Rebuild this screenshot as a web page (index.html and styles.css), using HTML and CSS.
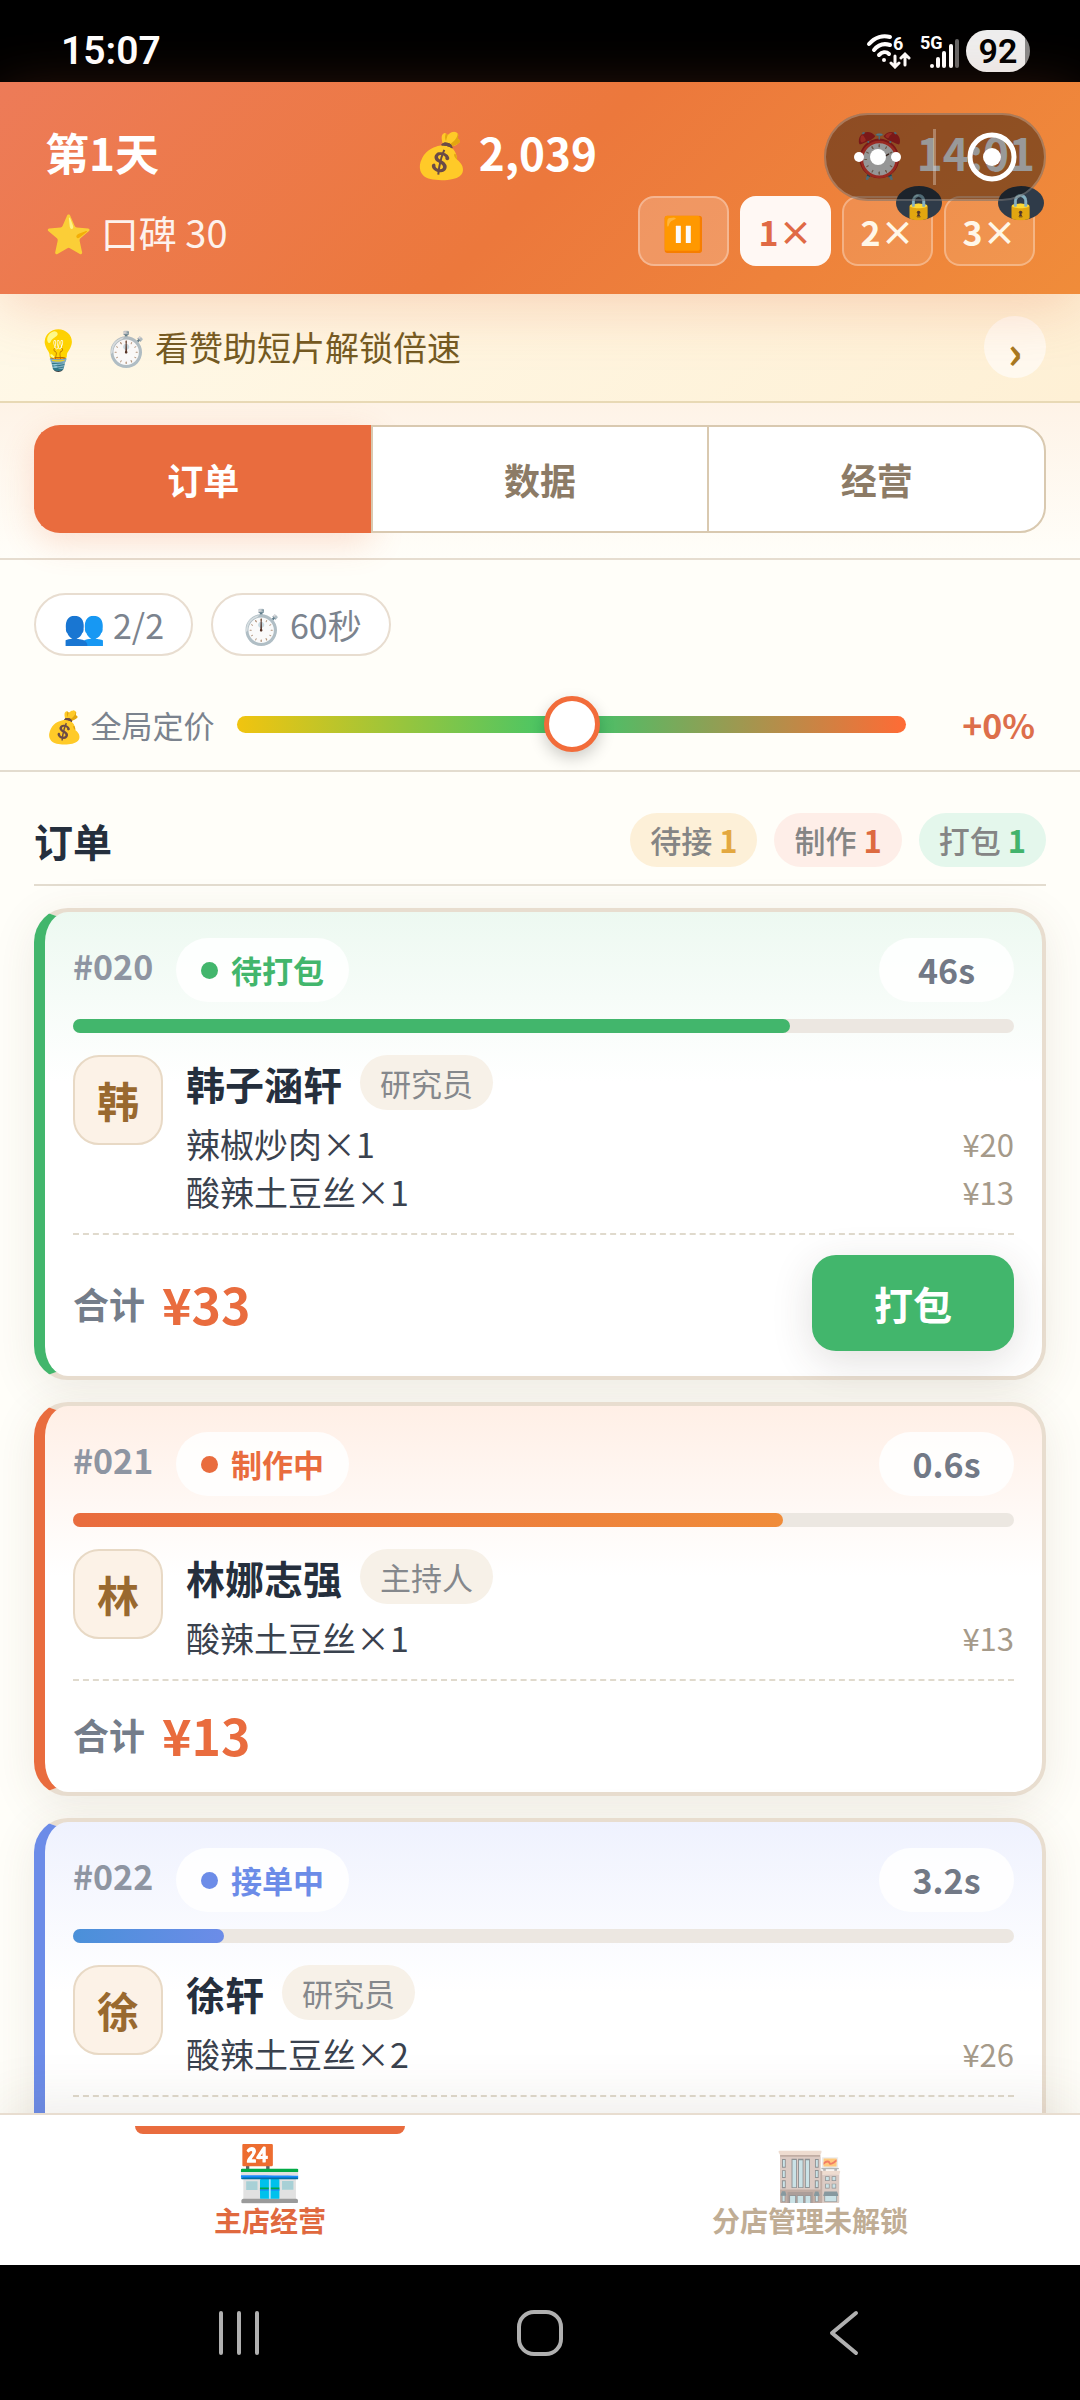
FILE: index.html
```html
<!DOCTYPE html>
<html lang="zh-CN">
<head>
  <meta charset="UTF-8">
  <meta name="viewport" content="width=device-width, initial-scale=1.0">
  <title>主店经营</title>
  <link rel="stylesheet" href="styles.css">
</head>
<body>
  <div class="status-bar">
    <span class="time">15:07</span>
    <div class="status-icons">
      <svg width="46" height="36" viewBox="0 0 46 36" fill="none" stroke="#fff" stroke-width="4" stroke-linecap="round">
        <path d="M3 11C9 4 17 2 24 4"/>
        <path d="M8 17c4-5 10-7 16-5"/>
        <path d="M13 22c3-3 7-4 10-1"/>
        <circle cx="18" cy="27" r="2" fill="#fff" stroke="none"/>
        <path d="M29 23v10M25 30l4 4 4-4M39 32V22M35 25l4-4 4 4" stroke-width="3"/>
        <text x="27" y="17" class="svg-text">6</text>
      </svg>
      <svg width="42" height="40" viewBox="0 0 42 40">
        <text x="2" y="18" class="svg-text">5G</text>
        <g fill="#fff">
          <circle cx="14" cy="35" r="2"/>
          <rect x="18" y="26" width="4" height="11" rx="2"/>
          <rect x="24" y="20" width="4" height="17" rx="2"/>
          <rect x="31" y="13" width="4" height="24" rx="2"/>
          <rect x="37" y="8" width="4" height="29" rx="2" fill="#666"/>
        </g>
      </svg>
      <span class="battery">92</span>
    </div>
  </div>

  <header class="header">
    <div class="header-row">
      <span>第1天</span>
      <span>💰 2,039</span>
      <span>⏰ 14:01</span>
    </div>
    <div class="header-row sub">
      <span class="reputation">⭐ 口碑 30</span>
      <div class="speeds">
        <button class="speed pause">⏸️</button>
        <button class="speed active">1×</button>
        <button class="speed">2×<span class="lock">🔒</span></button>
        <button class="speed">3×<span class="lock">🔒</span></button>
      </div>
    </div>
    <div class="capsule">
      <svg viewBox="0 0 222 88" fill="#fff">
        <circle cx="35" cy="44" r="5"/>
        <circle cx="54" cy="44" r="8"/>
        <circle cx="72" cy="44" r="5"/>
        <rect x="109" y="16" width="3" height="56" opacity=".3"/>
        <circle cx="168" cy="44" r="22" fill="none" stroke="#fff" stroke-width="5"/>
        <circle cx="168" cy="44" r="9"/>
      </svg>
    </div>
  </header>

  <div class="hint">
    <span class="bulb">💡</span>
    <span class="hint-text">⏱️ 看赞助短片解锁倍速</span>
    <button class="hint-go">›</button>
  </div>

  <div class="tabs-wrap">
    <div class="tabs">
      <button class="tab active">订单</button>
      <button class="tab">数据</button>
      <button class="tab">经营</button>
    </div>
  </div>

  <section class="controls">
    <div class="chips">
      <span class="chip">👥 2/2</span>
      <span class="chip">⏱️ 60秒</span>
    </div>
    <div class="pricing">
      <label for="price">💰 全局定价</label>
      <input type="range" id="price" min="-50" max="50" value="0">
      <output for="price">+0%</output>
    </div>
  </section>

  <main class="orders">
    <div class="orders-head">
      <h2>订单</h2>
      <div class="counts">
        <span class="count wait">待接 <b>1</b></span>
        <span class="count cook">制作 <b>1</b></span>
        <span class="count pack">打包 <b>1</b></span>
      </div>
    </div>

    <article class="card green">
      <div class="card-top">
        <span class="no">#020</span>
        <span class="state">待打包</span>
        <span class="left">46s</span>
      </div>
      <div class="bar"><div class="fill" style="width: 76.2%"></div></div>
      <div class="customer">
        <div class="avatar">韩</div>
        <div class="detail">
          <div class="who"><h3>韩子涵轩</h3><span class="role">研究员</span></div>
          <div class="dish"><span>辣椒炒肉×1</span><span class="price">¥20</span></div>
          <div class="dish"><span>酸辣土豆丝×1</span><span class="price">¥13</span></div>
        </div>
      </div>
      <div class="card-foot">
        <span class="sum">合计</span>
        <span class="amount">¥33</span>
        <button class="pack-btn">打包</button>
      </div>
    </article>

    <article class="card orange">
      <div class="card-top">
        <span class="no">#021</span>
        <span class="state">制作中</span>
        <span class="left">0.6s</span>
      </div>
      <div class="bar"><div class="fill" style="width: 75.4%"></div></div>
      <div class="customer">
        <div class="avatar">林</div>
        <div class="detail">
          <div class="who"><h3>林娜志强</h3><span class="role">主持人</span></div>
          <div class="dish"><span>酸辣土豆丝×1</span><span class="price">¥13</span></div>
        </div>
      </div>
      <div class="card-foot">
        <span class="sum">合计</span>
        <span class="amount">¥13</span>
      </div>
    </article>

    <article class="card blue">
      <div class="card-top">
        <span class="no">#022</span>
        <span class="state">接单中</span>
        <span class="left">3.2s</span>
      </div>
      <div class="bar"><div class="fill" style="width: 16%"></div></div>
      <div class="customer">
        <div class="avatar">徐</div>
        <div class="detail">
          <div class="who"><h3>徐轩</h3><span class="role">研究员</span></div>
          <div class="dish"><span>酸辣土豆丝×2</span><span class="price">¥26</span></div>
        </div>
      </div>
      <div class="card-foot"></div>
    </article>
  </main>

  <nav class="bottom-nav">
    <a href="#" class="nav-item active"><span class="nav-icon">🏪</span>主店经营</a>
    <a href="#" class="nav-item locked"><span class="nav-icon">🏬</span>分店管理未解锁</a>
  </nav>

  <div class="system-nav">
    <svg width="48" height="48" viewBox="0 0 48 48"><path d="M5 4v40M23 4v40M41 4v40"/></svg>
    <svg width="48" height="48" viewBox="0 0 48 48"><rect x="3" y="3" width="42" height="42" rx="15"/></svg>
    <svg width="48" height="48" viewBox="0 0 48 48"><path d="M40 4L16 24l24 20"/></svg>
  </div>
</body>
</html>
```

FILE: styles.css
```css
* {
  box-sizing: border-box;
}

body {
  margin: 0;
  height: 100vh;
  display: flex;
  flex-direction: column;
  overflow: hidden;
  background: #fffef9;
  color: #252f3d;
  font-family: "Noto Sans CJK SC", "Noto Color Emoji", sans-serif;
  font-size: 34px;
}

body > * {
  flex-shrink: 0;
}

button {
  font: inherit;
  padding: 0;
  border: none;
  cursor: pointer;
}

h2, h3 {
  margin: 0;
  font-size: 39px;
  line-height: 54px;
}

/* status bar */
.status-bar {
  height: 82px;
  padding: 20px 50px 0 61px;
  display: flex;
  align-items: center;
  justify-content: space-between;
  background: #000;
  color: #fff;
}

.time {
  font: 600 39px Roboto, sans-serif;
}

.status-icons {
  display: flex;
  align-items: center;
  gap: 6px;
}

.svg-text {
  font: bold 18px Roboto, sans-serif;
  fill: #fff;
  stroke: none;
}

.battery {
  width: 64px;
  line-height: 42px;
  border-radius: 21px;
  background: linear-gradient(90deg, #eee 92%, #888 92%);
  color: #000;
  text-align: center;
  font-family: Roboto, sans-serif;
  font-weight: 600;
}

/* header */
.header {
  position: relative;
  z-index: 2;
  padding: 40px 45px 28px;
  background: linear-gradient(135deg, #ed7b58, #ec783c 50%, #f08c3a);
  box-shadow: 0 12px 56px rgba(232, 108, 60, 0.25);
  color: #fff;
}

.header-row {
  display: flex;
  justify-content: space-between;
  align-items: center;
  height: 60px;
  font-size: 44px;
  font-weight: 600;
}

.header-row.sub {
  height: 70px;
  margin-top: 14px;
  font-size: 38px;
  font-weight: 400;
}

.reputation {
  opacity: 0.9;
}

.speeds {
  display: flex;
  gap: 11px;
}

.speed {
  position: relative;
  width: 91px;
  height: 70px;
  border: 2px solid rgba(255, 255, 255, 0.3);
  border-radius: 16px;
  background: rgba(255, 255, 255, 0.1);
  color: #fff7e8;
  font-size: 34px;
  font-weight: 600;
}

.speed.pause {
  background: rgba(255, 255, 255, 0.2);
}

.speed.active {
  background: #fff8f4;
  border-color: #fff8f4;
  color: #e06a45;
}

.lock {
  position: absolute;
  top: -12px;
  right: -11px;
  width: 46px;
  height: 34px;
  border-radius: 50%;
  background: #2f3b49;
  font-size: 25px;
  line-height: 36px;
}

.capsule {
  position: absolute;
  top: 31px;
  right: 34px;
  width: 222px;
  height: 88px;
  border-radius: 44px;
  background: rgba(0, 0, 0, 0.4);
  box-shadow: inset 0 0 0 2px rgba(255, 255, 255, 0.25);
}

.capsule svg {
  display: block;
}

/* sponsor hint */
.hint {
  display: flex;
  align-items: center;
  height: 109px;
  padding: 0 34px 2px;
  background: linear-gradient(135deg, #fff9e8, #fef0d5);
  border-bottom: 2px solid #e8d9b5;
  color: #735a22;
}

.bulb {
  width: 71px;
  font-size: 39px;
}

.hint-text {
  flex: 1;
}

.hint-go {
  width: 62px;
  height: 62px;
  padding-top: 6px;
  border-radius: 50%;
  background: rgba(255, 255, 255, 0.6);
  color: #a87820;
  font-size: 45px;
  font-weight: 700;
  line-height: 50px;
}

/* tabs */
.tabs-wrap {
  padding: 22px 34px 25px;
  background: linear-gradient(#fef3e7, #fffef9);
  border-bottom: 2px solid #e6ddd0;
}

.tabs {
  display: flex;
  height: 108px;
}

.tab {
  flex: 1;
  border: 2px solid #d9c9b0;
  border-right-width: 0;
  background: #fff;
  color: #8c7b66;
  font-size: 36px;
  font-weight: 600;
}

.tab.active {
  background: #e96c3e;
  border-color: #e96c3e;
  color: #fff;
  box-shadow: 0 10px 34px rgba(233, 108, 62, 0.2);
}

.tab:first-child {
  border-radius: 26px 0 0 26px;
}

.tab:last-child {
  border-right-width: 2px;
  border-radius: 0 26px 26px 0;
}

/* controls */
.controls {
  padding: 33px 34px 16px;
  border-bottom: 2px solid #e3dccf;
  color: #7b838e;
}

.chips {
  display: flex;
  gap: 18px;
}

.chip {
  height: 63px;
  padding: 0 27px;
  border: 2px solid #e8ddd0;
  border-radius: 32px;
  background: #fff;
  font-size: 34px;
  line-height: 60px;
}

.pricing {
  display: flex;
  align-items: center;
  height: 60px;
  margin-top: 38px;
  padding: 0 11px;
}

.pricing label {
  width: 192px;
  font-size: 31px;
}

.pricing input {
  -webkit-appearance: none;
  appearance: none;
  flex: 1;
  min-width: 0;
  height: 17px;
  margin: 0;
  border-radius: 9px;
  background: linear-gradient(90deg, #f1c40f, #3cc66c 50%, #ff6b35);
}

.pricing input::-webkit-slider-thumb {
  -webkit-appearance: none;
  width: 56px;
  height: 56px;
  border: 5px solid #f26c3a;
  border-radius: 50%;
  background: #fff;
  box-shadow: 0 6px 16px rgba(0, 0, 0, 0.2);
}

.pricing output {
  width: 129px;
  color: #dd6f4b;
  font-weight: 600;
  text-align: right;
}

/* orders */
.orders {
  flex: 1;
  min-height: 0;
  padding: 41px 34px 0;
  overflow: hidden;
}

.orders-head {
  display: flex;
  align-items: center;
  justify-content: space-between;
  padding-bottom: 17px;
  margin-bottom: 22px;
  border-bottom: 2px solid #e3dccf;
}

.counts {
  display: flex;
  gap: 17px;
}

.count {
  padding: 0 20px;
  border-radius: 27px;
  color: #858585;
  font-size: 31px;
  font-weight: 500;
  line-height: 54px;
}

.wait { background: #fdf0d8; }
.cook { background: #feeee8; }
.pack { background: #e4f7ec; }
.wait b { color: #e3a840; }
.cook b { color: #dd6a40; }
.pack b { color: #42b36c; }

.card {
  padding: 26px 28px 25px;
  margin-bottom: 22px;
  border: 4px solid #e8ddcf;
  border-left: 11px solid var(--main);
  border-radius: 34px;
  background: #fff linear-gradient(var(--tint), #fff 170px);
  box-shadow: 0 10px 45px rgba(90, 70, 40, 0.1);
}

.green {
  --main: #42b66c;
  --tint: #edf9f1;
  --bar: #42b66c;
}

.orange {
  --main: #e96c3e;
  --tint: #ffefe6;
  --bar: linear-gradient(90deg, #e96c3e, #f08c3a);
}

.blue {
  --main: #6c8ce8;
  --tint: #eff2fe;
  --bar: linear-gradient(90deg, #4a90d9, #6c8ce8);
}

.card-top {
  display: flex;
  align-items: center;
}

.no {
  width: 103px;
  color: #8e95a2;
  font-size: 34px;
  font-weight: 600;
  line-height: 56px;
  align-self: flex-start;
}

.state {
  display: flex;
  align-items: center;
  gap: 13px;
  padding: 0 25px;
  border-radius: 32px;
  background: rgba(255, 255, 255, 0.85);
  color: var(--main);
  font-size: 31px;
  font-weight: 600;
  line-height: 64px;
}

.state::before {
  content: "";
  width: 17px;
  height: 17px;
  border-radius: 50%;
  background: var(--main);
}

.left {
  width: 135px;
  margin-left: auto;
  border-radius: 32px;
  background: rgba(255, 255, 255, 0.85);
  color: #727986;
  font-weight: 600;
  line-height: 64px;
  text-align: center;
}

.bar {
  height: 14px;
  margin: 17px 0 22px;
  border-radius: 7px;
  background: #ece7e1;
}

.fill {
  height: 14px;
  border-radius: 7px;
  background: var(--bar);
}

.customer {
  display: flex;
  gap: 23px;
  padding-bottom: 17px;
  border-bottom: 2px dashed #e0dacd;
}

.avatar {
  width: 90px;
  height: 90px;
  border: 2px solid #e8d9c5;
  border-radius: 26px;
  background: #fcf2e7;
  color: #99692f;
  font-size: 42px;
  font-weight: 700;
  line-height: 86px;
  text-align: center;
}

.detail {
  flex: 1;
}

.who {
  display: flex;
  align-items: center;
  gap: 18px;
  margin-bottom: 10px;
}

.role {
  padding: 0 20px;
  border-radius: 28px;
  background: #f7f1e8;
  color: #85888c;
  font-size: 31px;
  line-height: 55px;
}

.dish {
  display: flex;
  justify-content: space-between;
  color: #3a424e;
  line-height: 48px;
}

.price {
  color: #a59a8a;
  font-size: 31px;
}

.card-foot {
  display: flex;
  align-items: center;
  gap: 17px;
  min-height: 66px;
  margin-top: 20px;
}

.sum {
  color: #747d8a;
  font-size: 36px;
  font-weight: 600;
}

.amount {
  color: #e96c3e;
  font-size: 50px;
  font-weight: 700;
  line-height: 66px;
}

.pack-btn {
  width: 202px;
  height: 96px;
  margin-left: auto;
  border-radius: 24px;
  background: #42b66c;
  box-shadow: 0 10px 40px rgba(60, 50, 40, 0.15);
  color: #fff;
  font-size: 39px;
  font-weight: 700;
}

/* bottom navigation */
.bottom-nav {
  position: relative;
  display: flex;
  height: 152px;
  padding-top: 11px;
  background: #fff;
  border-top: 2px solid #e8ddd0;
  box-shadow: 0 -10px 56px rgba(90, 70, 40, 0.1);
}

.nav-item {
  flex: 1;
  display: flex;
  flex-direction: column;
  align-items: center;
  color: #e0693f;
  font-size: 28px;
  font-weight: 600;
  line-height: 32px;
  text-decoration: none;
}

.nav-item::before {
  content: "";
  width: 50%;
  height: 8px;
  margin-bottom: 8px;
  border-radius: 0 0 8px 8px;
}

.nav-item.active::before {
  background: #e96c3e;
}

.nav-icon {
  margin-bottom: 8px;
  font-size: 54px;
  line-height: 54px;
}

.locked {
  color: #c0ad95;
}

.locked .nav-icon {
  opacity: 0.6;
}

.system-nav {
  position: relative;
  display: flex;
  align-items: center;
  justify-content: space-between;
  height: 135px;
  padding: 0 20%;
  background: #000;
  fill: none;
  stroke: #b0b0b0;
  stroke-width: 4;
  stroke-linecap: round;
  stroke-linejoin: round;
}
```
